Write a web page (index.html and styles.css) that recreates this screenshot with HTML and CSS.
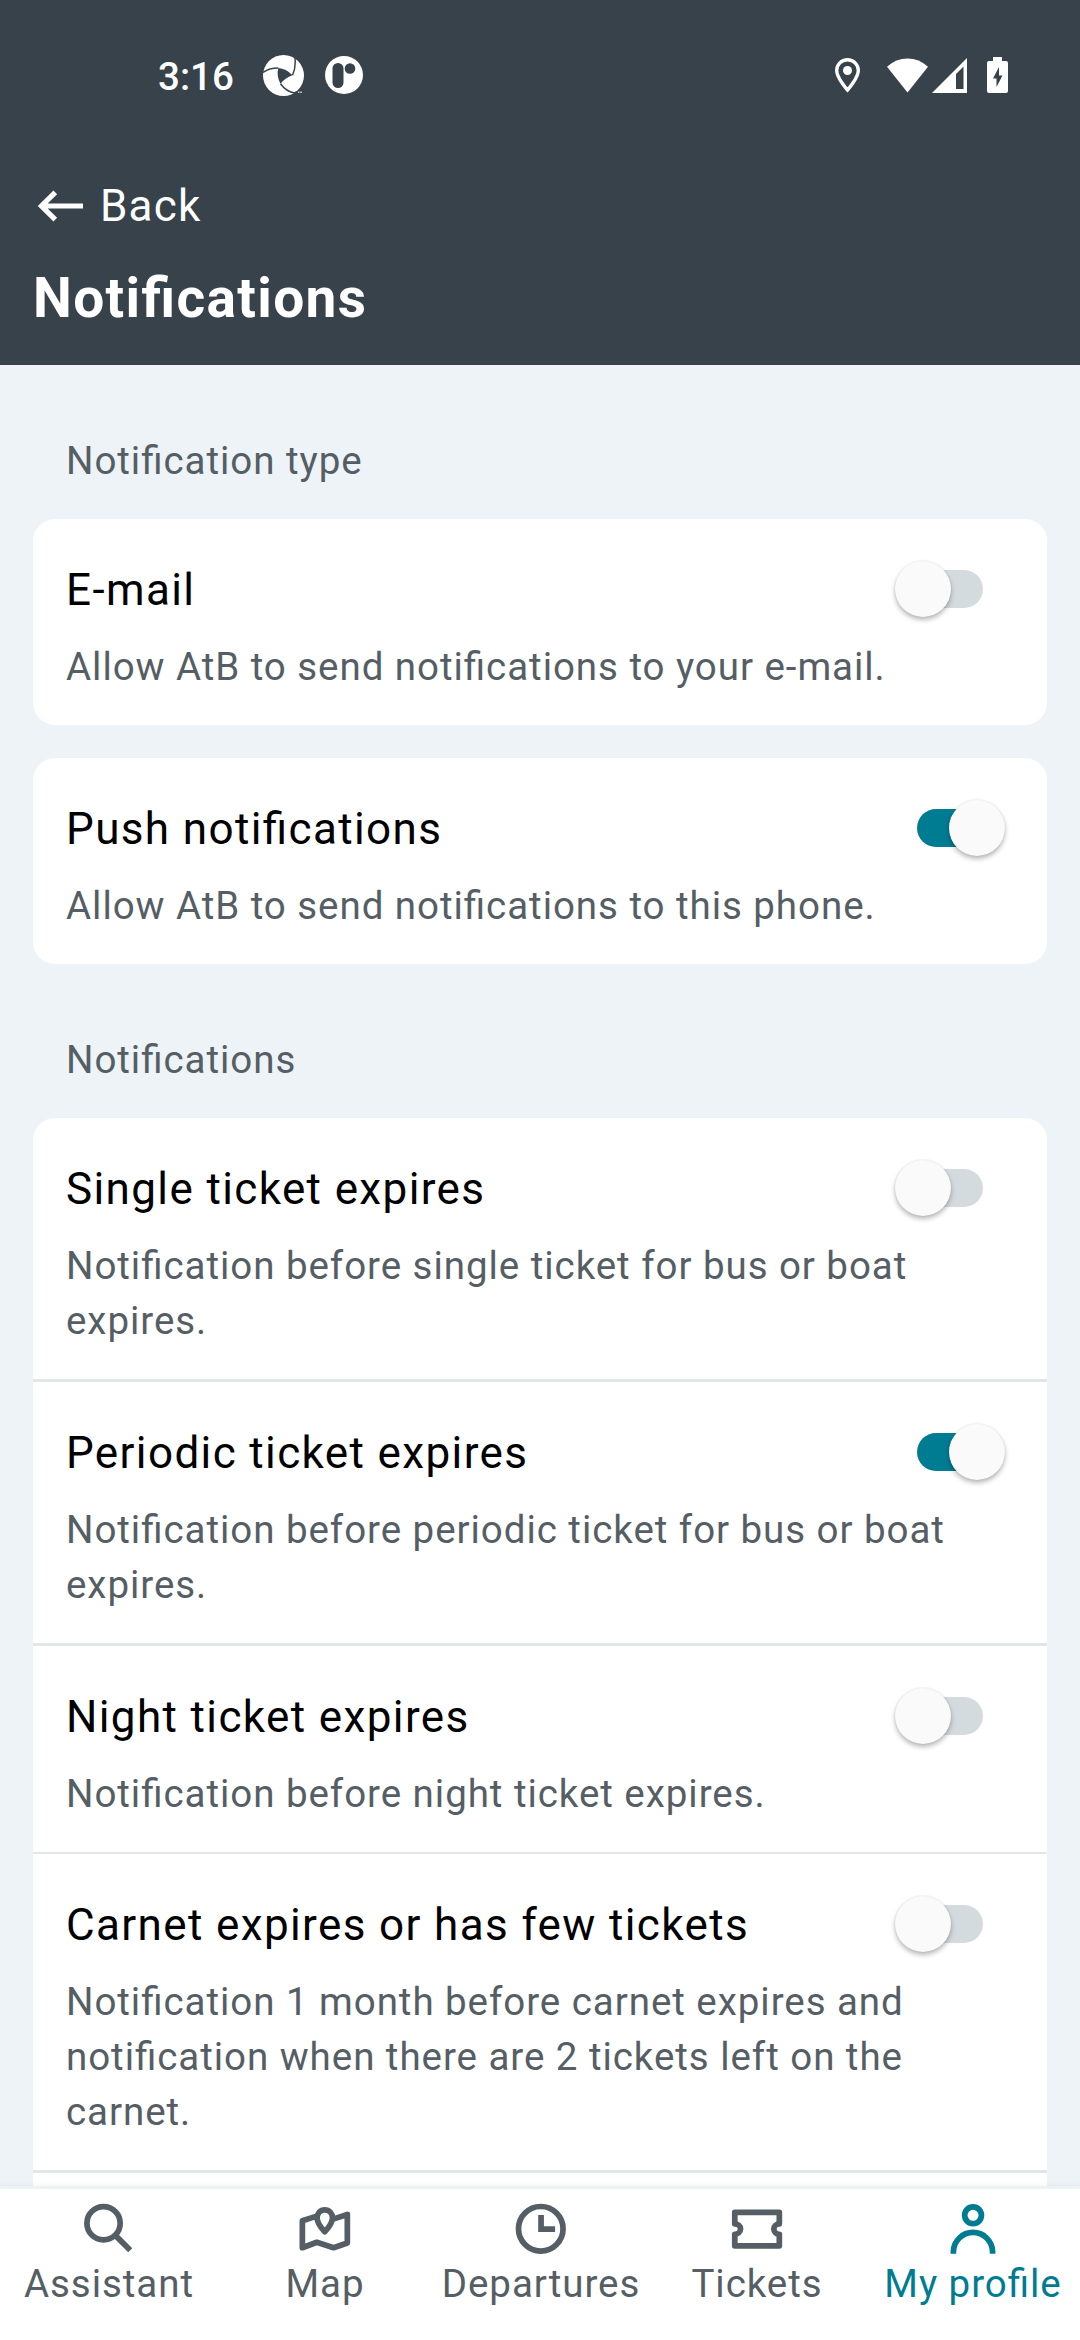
FILE: index.html
```html
<!DOCTYPE html>
<html lang="en">
<head>
<meta charset="utf-8">
<title>Notifications</title>
<link rel="stylesheet" href="styles.css">
</head>
<body>
<div class="screen">
  <header class="header">
    <div class="status">
      <span class="clock">3:16</span>
      <svg class="swirl" viewBox="0 0 41 41" width="41" height="41"><circle cx="20.5" cy="20.5" r="20.5" fill="#fff"/><path d="M15.300 13Q23 13.500 29.500 20.300Q22 23 17.500 28.700Q13.200 21 15.300 13Z" fill="#37424a"/><path d="M15.300 13Q6 13 0 17.500M29.500 20.300Q33 13 32 3M17.500 28.700Q23 36.500 32 38" fill="none" stroke="#37424a" stroke-width="1.500"/><path d="M32 36.500H41V41H30Z" fill="#37424a"/><path d="M35 36.500h1.500v1.500h-1.500zM37.200 36.500h1.800v1.500h-1.800z" fill="#c3c7c9"/></svg>
      <svg class="badge" viewBox="0 0 38 38" width="38" height="38"><circle cx="19" cy="19" r="19" fill="#fff"/><rect x="7.500" y="7" width="11" height="25" rx="5.500" fill="#37424a"/><circle cx="25" cy="12.500" r="5.300" fill="#37424a"/></svg>
      <span class="spacer"></span>
      <svg class="pin" viewBox="0 0 25 35" width="25" height="35"><path d="M12.500 1.700C6.500 1.700 1.700 6.500 1.700 12.500c0 7.500 10.800 19.500 10.800 19.500s10.800-12 10.800-19.500C23.300 6.500 18.500 1.700 12.500 1.700Z" fill="none" stroke="#fff" stroke-width="3.400"/><circle cx="12.500" cy="12.500" r="4.500" fill="#fff"/></svg>
      <svg class="wifi" viewBox="0 0 41 35" width="41" height="35"><path d="M0 8.800Q9 .5 20.500 .5T41 8.800L20.500 34.500Z" fill="#fff"/></svg>
      <svg class="signal" viewBox="0 0 35 35" width="35" height="35"><path fill-rule="evenodd" d="M0 35L35 0V35ZM24 16V31H31.500V8.500Z" fill="#fff"/></svg>
      <svg class="battery" viewBox="0 0 21 36" width="21" height="36"><path d="M6 0h9v4h4a2 2 0 0 1 2 2v28a2 2 0 0 1-2 2H2a2 2 0 0 1-2-2V6a2 2 0 0 1 2-2h4Z" fill="#fff"/><path d="M12 10L6 21.500h3.500V30L15.500 18.500H12Z" fill="#37424a"/></svg>
    </div>
    <div class="back">
      <svg viewBox="0 0 45 32" width="45" height="32"><path d="M45 16H4M17.300 2.300L3.500 16L17.300 29.700" fill="none" stroke="#fff" stroke-width="5.200"/></svg>
      <span>Back</span>
    </div>
    <h1 class="title">Notifications</h1>
  </header>

  <main class="content">
    <h2 class="section">Notification type</h2>
    <section class="card">
      <div class="row">
        <div class="line"><span class="name">E-mail</span><span class="switch"><i class="knob"></i></span></div>
        <p class="desc">Allow AtB to send notifications to your e-mail.</p>
      </div>
    </section>
    <section class="card card-next">
      <div class="row">
        <div class="line"><span class="name">Push notifications</span><span class="switch on"><i class="knob"></i></span></div>
        <p class="desc">Allow AtB to send notifications to this phone.</p>
      </div>
    </section>

    <h2 class="section">Notifications</h2>
    <section class="card">
      <div class="row">
        <div class="line"><span class="name">Single ticket expires</span><span class="switch"><i class="knob"></i></span></div>
        <p class="desc">Notification before single ticket for bus or boat expires.</p>
      </div>
      <div class="row">
        <div class="line"><span class="name">Periodic ticket expires</span><span class="switch on"><i class="knob"></i></span></div>
        <p class="desc">Notification before periodic ticket for bus or boat expires.</p>
      </div>
      <div class="row">
        <div class="line"><span class="name">Night ticket expires</span><span class="switch"><i class="knob"></i></span></div>
        <p class="desc">Notification before night ticket expires.</p>
      </div>
      <div class="row thin">
        <div class="line"><span class="name">Carnet expires or has few tickets</span><span class="switch"><i class="knob"></i></span></div>
        <p class="desc">Notification 1 month before carnet expires and notification when there are 2 tickets left on the carnet.</p>
      </div>
      <div class="row"></div>
    </section>
  </main>

  <nav class="tabs">
    <a class="tab"><svg class="icon" viewBox="0 0 20 20"><circle cx="8.200" cy="8.100" r="6.050"/><path d="M12.500 12.500L17.900 17.900"/></svg><span class="label">Assistant</span></a>
    <a class="tab"><svg class="icon" viewBox="0 0 20 20"><path stroke-linejoin="round" d="M7.200 5.500L1.950 7.200V17L7.200 15L13.300 17L18.300 15.300V4.900L13.400 6.500M10.100 3.200C8.500 3.200 7.300 4.500 7.300 6.100C7.300 8.300 10.100 11.200 10.100 11.200S12.900 8.300 12.900 6.100C12.900 4.500 11.700 3.200 10.100 3.200Z"/></svg><span class="label">Map</span></a>
    <a class="tab"><svg class="icon" viewBox="0 0 20 20"><circle cx="10.100" cy="10.100" r="8.100"/><path d="M10.200 5.100V10.200H15.300"/></svg><span class="label">Departures</span></a>
    <a class="tab"><svg class="icon" viewBox="0 0 20 20"><path stroke-linejoin="round" d="M2.100 4.100H18.300V8.300C17.300 8.300 16.300 9.100 16.300 10.200S17.300 12.100 18.300 12.100V16.300H2.100V12.100C3.100 12.100 4.200 11.300 4.200 10.200S3.100 8.300 2.100 8.300Z"/></svg><span class="label">Tickets</span></a>
    <a class="tab active"><svg class="icon" viewBox="0 0 20 20"><circle cx="10.200" cy="5.200" r="3.050"/><path d="M3.050 19.200V18.300A7.130 7.130 0 0 1 17.300 18.300V19.200"/></svg><span class="label">My profile</span></a>
  </nav>
</div>
</body>
</html>
```
FILE: styles.css
```css
* { box-sizing: border-box; margin: 0; padding: 0; }
body {
  width: 1080px;
  height: 2340px;
  overflow: hidden;
  background: #edf3f6;
  font-family: Roboto, "Noto Sans", sans-serif;
  font-feature-settings: "liga" 1;
  color: #000;
}
.screen { display: flex; flex-direction: column; height: 2340px; }
.header { flex: none; height: 365px; background: #37424a; color: #fff; }
.status { display: flex; height: 150px; padding: 0 72px 0 158px; align-items: center; }
.clock { width: 105px; font-size: 38.5px; font-weight: 500; line-height: 46px; padding-top: 4px; }
.badge { margin-left: 21px; }
.spacer { flex: 1; }
.pin, .wifi, .signal { margin-top: 1px; }
.wifi { margin-left: 27px; }
.signal { margin-left: 4px; }
.battery { margin-left: 20px; }
.back { display: flex; align-items: center; gap: 17px; height: 110px; padding: 1px 0 0 38px; font-size: 44px; letter-spacing: 1.2px; }
.title { padding-left: 33px; font-size: 55px; font-weight: 700; line-height: 77px; letter-spacing: 1.375px; }
.content { flex: 1; min-height: 0; overflow: hidden; padding: 0 33px; }
.section { padding: 68px 33px 31px; font-size: 38.5px; font-weight: 400; line-height: 55px; letter-spacing: .95px; color: #555e65; }
.card { overflow: hidden; border-radius: 22px; background: #fff; }
.card-next { margin-top: 33px; }
.row { padding: 33px; }
.row + .row { border-top: 3px solid #e1e6ea; }
.row + .thin { border-top-width: 2px; }
.line { display: flex; align-items: center; justify-content: space-between; height: 74px; }
.name { padding-top: 2px; font-size: 44px; line-height: 55px; letter-spacing: 1.375px; }
.desc { margin: 13px 0 -2px; font-size: 38.5px; line-height: 55px; letter-spacing: .95px; color: #555e65; }
.switch { position: relative; width: 74px; height: 38px; margin-right: 31px; border-radius: 19px; background: #d4dbdf; }
.switch.on { margin-right: 23px; background: #007c92; }
.knob { position: absolute; left: -14px; top: -9px; width: 56px; height: 56px; border-radius: 50%; background: #fafafa; box-shadow: 0 3px 5px rgba(0, 0, 0, .28), 0 0 2px rgba(0, 0, 0, .1); }
.on .knob { left: auto; right: -14px; }
.tabs { flex: none; display: grid; grid-template-columns: repeat(5, 1fr); height: 154px; border-top: 3px solid #ecf3f5; background: #fff; box-shadow: 0 -1px 5px rgba(0, 0, 0, .05); position: relative; }
.tab { display: flex; flex-direction: column; align-items: center; padding-top: 11.500px; font-size: 38.5px; line-height: 55px; letter-spacing: .95px; color: #555e65; white-space: nowrap; }
.tab.active { color: #007c92; }
.label { padding-left: 2px; }
.icon { width: 55px; height: 55px; fill: none; stroke: currentColor; stroke-width: 2.080; }
```
